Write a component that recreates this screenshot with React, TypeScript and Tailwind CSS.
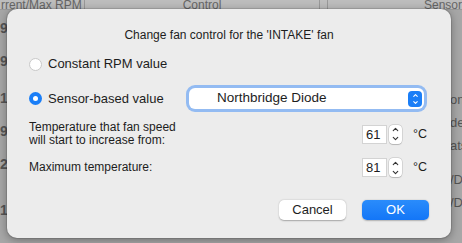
import { ChevronUp, ChevronDown } from "lucide-react";

const font = { fontFamily: "'Liberation Sans', Arial, sans-serif" };

function Stepper({ value }: { value: string }) {
  return (
    <div className="flex items-center">
      <div className="flex h-[19px] w-[25px] items-center border border-[#d3d3d3] bg-white pl-[3px] text-[13px] leading-[15px] text-[#1d1d1d]">
        {value}
      </div>
      <div className="ml-[2px] flex h-[19px] w-[13px] flex-col items-center justify-center rounded-[4px] bg-white shadow-[0_0_0_0.5px_rgba(0,0,0,0.18),0_0.5px_1px_rgba(0,0,0,0.15)]">
        <ChevronUp className="h-[9px] w-[9px] text-[#333]" strokeWidth={3} />
        <ChevronDown className="h-[9px] w-[9px] text-[#333]" strokeWidth={3} />
      </div>
      <span className="ml-[11px] text-[12.5px] text-[#1d1d1d]">°C</span>
    </div>
  );
}

function BgColumnLeft() {
  return (
    <div className="flex w-[87px] flex-col pt-[10px] text-[14px] font-bold leading-[16px] text-[#555]">
      <span className="h-[33px]">9</span>
      <span className="h-[37px]">9</span>
      <span className="h-[33px]">1</span>
      <span className="h-[33px]">9</span>
      <span className="h-[46px]">2</span>
      <span>1</span>
    </div>
  );
}

export default function App() {
  return (
    <div className="relative h-[243px] w-[462px] overflow-hidden bg-[#a7a7a7]" style={font}>
      {/* window behind the sheet */}
      <div className="flex h-[10px] border-b border-[#9a9a9a] bg-[#bdbdbd] text-[12px] leading-[10px] text-[#666]">
        <div className="w-[87px] overflow-hidden whitespace-nowrap border-r border-[#999] pl-[1px]">rrent/Max RPM</div>
        <div className="w-[241px] border-r border-[#999] text-center">Control</div>
        <div className="w-[8px] border-r border-[#999]" />
        <div className="flex-1 whitespace-nowrap pl-[96px]">Sensor</div>
      </div>
      <div className="flex">
        <BgColumnLeft />
        <div className="flex-1" />
        <div className="flex w-[12px] flex-col overflow-hidden whitespace-nowrap pt-[82px] text-[13px] leading-[16px] text-[#555]">
          <span className="h-[23px]">on</span>
          <span className="h-[23px]">de</span>
          <span className="h-[34px]">ats</span>
          <span className="h-[23px]">/D</span>
          <span>/D</span>
        </div>
      </div>

      {/* sheet dialog */}
      <div className="absolute left-[7px] top-[9px] flex h-[229px] w-[444px] flex-col rounded-[10px] bg-[#ececec] px-[22px] shadow-[0_2px_10px_rgba(0,0,0,0.35)] ring-1 ring-black/10">
        <div className="mt-[18px] text-center text-[12px] leading-[16px] text-[#1d1d1d]">
          Change fan control for the 'INTAKE' fan
        </div>

        <label className="mt-[13px] flex items-center gap-[6px] text-[13px] leading-[16px] text-[#1d1d1d]">
          <span className="h-[13px] w-[13px] rounded-full border border-[#c9c9c9] bg-white" />
          Constant RPM value
        </label>

        <div className="mt-[16px] flex items-center">
          <label className="flex items-center gap-[6px] text-[13px] leading-[16px] text-[#1d1d1d]">
            <span className="flex h-[13px] w-[13px] items-center justify-center rounded-full bg-[#1a7ef7]">
              <span className="h-[5px] w-[5px] rounded-full bg-white" />
            </span>
            Sensor-based value
          </label>
          <div className="ml-auto mr-[5px] flex h-[21px] w-[235px] items-center rounded-[6px] bg-white pl-[28px] pr-[2px] text-[13.5px] text-[#1d1d1d] ring-[3px] ring-[#93bbf2]">
            <span className="flex-1">Northbridge Diode</span>
            <span className="flex h-[16px] w-[14px] flex-col items-center justify-center rounded-[4px] bg-[#1a7ef7]">
              <ChevronUp className="h-[7px] w-[7px] text-white" strokeWidth={3.5} />
              <ChevronDown className="h-[7px] w-[7px] text-white" strokeWidth={3.5} />
            </span>
          </div>
        </div>

        <div className="mt-[12px] flex items-center">
          <div className="text-[12px] leading-[13px] text-[#1d1d1d]">
            Temperature that fan speed
            <br />
            will start to increase from:
          </div>
          <div className="ml-auto mr-[2px]">
            <Stepper value="61" />
          </div>
        </div>

        <div className="mt-[11px] flex items-center">
          <div className="text-[12px] leading-[13px] text-[#1d1d1d]">Maximum temperature:</div>
          <div className="ml-auto mr-[2px]">
            <Stepper value="81" />
          </div>
        </div>

        <div className="mt-[23px] flex justify-end gap-[16px]">
          <button className="h-[20px] w-[67px] rounded-[5px] bg-white text-[13px] text-[#1d1d1d] shadow-[0_0.5px_1.5px_rgba(0,0,0,0.3)]">
            Cancel
          </button>
          <button className="h-[20px] w-[67px] rounded-[5px] bg-gradient-to-b from-[#2a8cfb] to-[#1376f7] text-[13px] text-white shadow-[0_0.5px_1.5px_rgba(0,0,0,0.25)]">
            OK
          </button>
        </div>
      </div>
    </div>
  );
}
